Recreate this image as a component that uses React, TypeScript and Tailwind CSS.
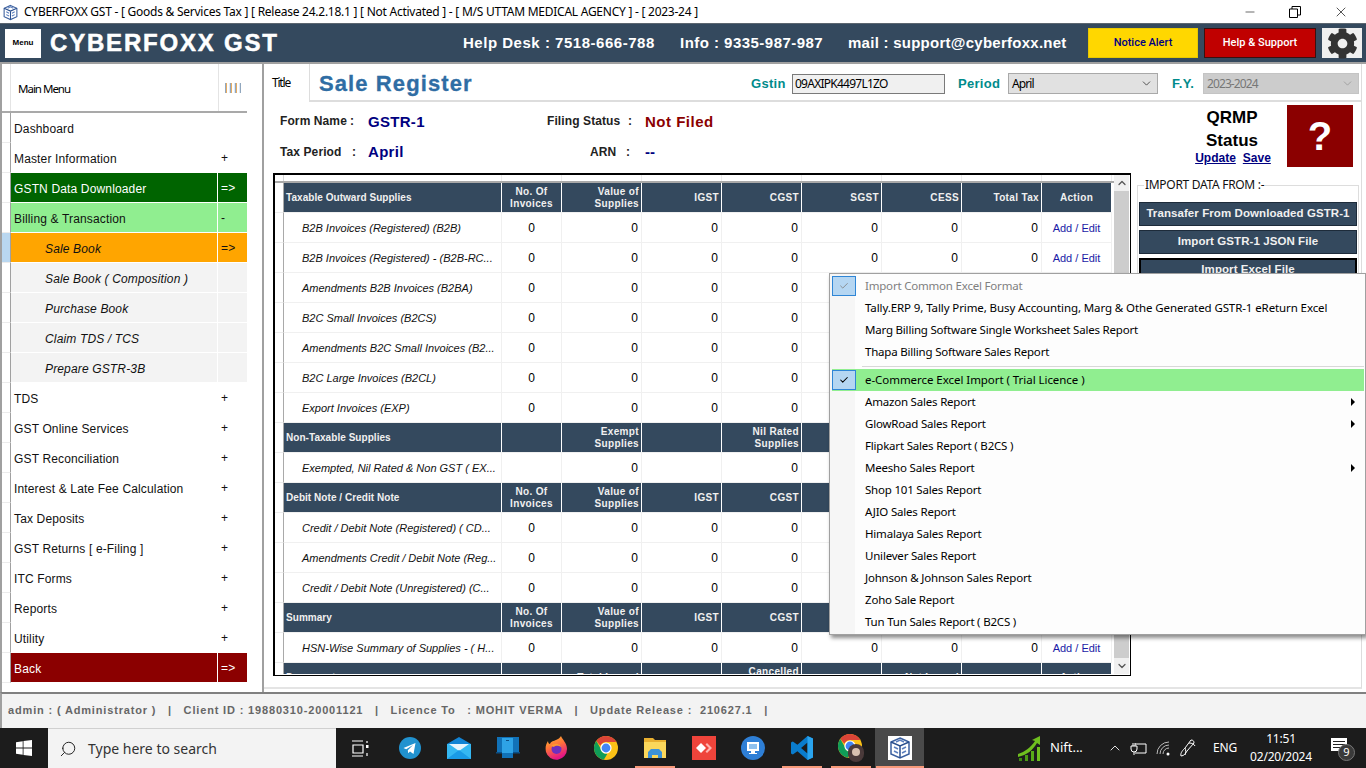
import React from 'react';
import { ChevronDown, ChevronUp, Search, Check, Minus, X } from 'lucide-react';
import { FaCog } from 'react-icons/fa';

const segoe = "font-['Noto_Sans',sans-serif]";

const menuItems = [
  { label: 'Dashboard', mark: '' },
  { label: 'Master Information', mark: '+' },
  { label: 'GSTN Data Downloader', mark: '=>', row: 'bg-[#006400] text-white' },
  { label: 'Billing & Transaction', mark: '-', row: 'bg-[#90ee90]' },
  { label: 'Sale Book', mark: '=>', row: 'bg-[#ffa500]', sub: true, selected: true },
  { label: 'Sale Book ( Composition )', mark: '', row: 'bg-[#f3f3f3]', sub: true },
  { label: 'Purchase Book', mark: '', row: 'bg-[#f3f3f3]', sub: true },
  { label: 'Claim TDS / TCS', mark: '', row: 'bg-[#f3f3f3]', sub: true },
  { label: 'Prepare GSTR-3B', mark: '', row: 'bg-[#f3f3f3]', sub: true },
  { label: 'TDS', mark: '+' },
  { label: 'GST Online Services', mark: '+' },
  { label: 'GST Reconciliation', mark: '+' },
  { label: 'Interest & Late Fee Calculation', mark: '+' },
  { label: 'Tax Deposits', mark: '+' },
  { label: 'GST Returns [ e-Filing ]', mark: '+' },
  { label: 'ITC Forms', mark: '+' },
  { label: 'Reports', mark: '+' },
  { label: 'Utility', mark: '+' },
  { label: 'Back', mark: '=>', row: 'bg-[#8b0000] text-white' },
];

const colWidths = ['w-[218px]', 'w-[60px]', 'w-[80px]', 'w-[80px]', 'w-[80px]', 'w-[80px]', 'w-[80px]', 'w-[80px]', 'w-[70px]'];

const fullHead = ['No. Of\nInvoices', 'Value of\nSupplies', 'IGST', 'CGST', 'SGST', 'CESS', 'Total Tax', 'Action'];

type Row =
  | { head: string; cols: string[] }
  | { label: string; vals: string[] };

const zeros = ['0', '0', '0', '0', '0', '0', '0', 'Add / Edit'];

const rows: Row[] = [
  { head: 'Taxable Outward Supplies', cols: fullHead },
  { label: 'B2B Invoices (Registered) (B2B)', vals: zeros },
  { label: 'B2B Invoices (Registered) - (B2B-RC...', vals: zeros },
  { label: 'Amendments B2B Invoices (B2BA)', vals: zeros },
  { label: 'B2C Small Invoices (B2CS)', vals: zeros },
  { label: 'Amendments B2C Small Invoices (B2...', vals: zeros },
  { label: 'B2C Large Invoices (B2CL)', vals: zeros },
  { label: 'Export Invoices (EXP)', vals: zeros },
  { head: 'Non-Taxable Supplies', cols: ['', 'Exempt\nSupplies', '', 'Nil Rated\nSupplies', '', 'Non GST\nSupplies', '', ''] },
  { label: 'Exempted, Nil Rated & Non GST ( EX...', vals: ['', '0', '', '0', '', '0', '', 'Add / Edit'] },
  { head: 'Debit Note / Credit Note', cols: fullHead },
  { label: 'Credit / Debit Note (Registered) ( CD...', vals: zeros },
  { label: 'Amendments Credit / Debit Note (Reg...', vals: zeros },
  { label: 'Credit / Debit Note (Unregistered) (C...', vals: zeros },
  { head: 'Summary', cols: fullHead },
  { label: 'HSN-Wise Summary of Supplies - ( H...', vals: zeros },
  { head: 'Documents', cols: ['', 'Total Issued', '', 'Cancelled\nDocuments', '', 'Net Issued', '', 'Action'] },
];

const popupTop = [
  'Marg Billing Software Single Worksheet Sales Report',
  'Thapa Billing Software Sales Report',
];

const popupBottom = [
  { t: 'Amazon Sales Report', more: true },
  { t: 'GlowRoad Sales Report', more: true },
  { t: 'Flipkart Sales Report ( B2CS )' },
  { t: 'Meesho Sales Report', more: true },
  { t: 'Shop 101 Sales Report' },
  { t: 'AJIO Sales Report' },
  { t: 'Himalaya Sales Report' },
  { t: 'Unilever Sales Report' },
  { t: 'Johnson & Johnson Sales Report' },
  { t: 'Zoho Sale Report' },
  { t: 'Tun Tun Sales Report ( B2CS )' },
];

const CubeIcon = ({ size }: { size: number }) => (
  <svg width={size} height={size} viewBox="0 0 24 24">
    <path d="M12 2l9 4v12l-9 4-9-4V6z" fill="#fff" stroke="#3a5f9e" strokeWidth="1.5" />
    <path d="M3 6l9 4 9-4M12 10v12" fill="none" stroke="#2a4f8e" strokeWidth="1.5" />
    <path d="M6 11l4 2M6 15l4 2M14 13l4-2M14 17l4-2M8 6l4-2 4 2" fill="none" stroke="#5b7fbe" strokeWidth="1.5" />
  </svg>
);

const ChromeIcon = () => (
  <svg width="24" height="24" viewBox="0 0 24 24">
    <circle cx="12" cy="12" r="12" fill="#fbc116" />
    <path d="M12 0a12 12 0 0 1 10.4 6H12a6 6 0 0 0-5.6 3.8L2.3 4.9A12 12 0 0 1 12 0z" fill="#db4437" />
    <path d="M2.3 4.9l4.9 8.6a5.5 5.5 0 0 0 6.2 4.3L9.8 23.8A12 12 0 0 1 2.3 4.9z" fill="#0f9d58" />
    <circle cx="12" cy="12" r="5.6" fill="#fff" />
    <circle cx="12" cy="12" r="4.4" fill="#4285f4" />
  </svg>
);

const taskIcons: { key: string; run?: boolean; active?: boolean; el: React.ReactNode }[] = [
  {
    key: 'view',
    el: (
      <svg width="17" height="17" viewBox="0 0 17 17" fill="none" stroke="#fff" strokeWidth="1.2">
        <path d="M0 1h11M0 16h11M1 5h10v8H1zM15 1v2M15 13v3" />
        <rect x="14" y="5" width="2.5" height="3" fill="#fff" stroke="none" />
      </svg>
    ),
  },
  {
    key: 'telegram',
    el: (
      <svg width="22" height="22" viewBox="0 0 22 22">
        <circle cx="11" cy="11" r="11" fill="#2192cf" />
        <path d="M4.5 11l12-5-2 11-3.5-2.6-1.8 1.8-.4-3L14 8l-6.800 4.300z" fill="#fff" />
      </svg>
    ),
  },
  {
    key: 'mail',
    el: (
      <svg width="24" height="22" viewBox="0 0 24 22">
        <path d="M0 7l12-7 12 7v15H0z" fill="#1283d4" />
        <path d="M0 7h24v15H0z" fill="#35b8f2" />
        <path d="M2 7h20l-10 7z" fill="#e8f4fc" />
        <path d="M0 22l12-9 12 9z" fill="#1a9be6" />
      </svg>
    ),
  },
  {
    key: 'tablet',
    el: (
      <svg width="24" height="22" viewBox="0 0 24 22">
        <rect x="1" y="0" width="22" height="16" fill="#1172b8" />
        <rect x="0" y="15" width="24" height="1.500" fill="#0b4f86" />
        <rect x="6" y="1" width="11" height="20" fill="#2ea3e6" />
        <rect x="6" y="16" width="11" height="5" fill="#1172b8" />
        <rect x="10" y="3" width="3" height="1" fill="#0b4f86" />
      </svg>
    ),
  },
  {
    key: 'firefox',
    el: (
      <svg width="23" height="24" viewBox="0 0 23 24">
        <defs>
          <linearGradient id="ff" x1="0" y1="0" x2="0.400" y2="1">
            <stop offset="0" stopColor="#ffc02e" />
            <stop offset="0.500" stopColor="#ff7139" />
            <stop offset="1" stopColor="#e31587" />
          </linearGradient>
        </defs>
        <path d="M16 0c1 3 6 7 6 13a10.700 10.700 0 0 1-21 3C0 11 1 8 3 5c0 2 1 3 2 3 1-3 4-3 6-4 2-1 4-2 5-4z" fill="url(#ff)" />
        <circle cx="11.500" cy="13" r="5" fill="#6e2fbf" />
        <path d="M6 10c3-3 9-3 10 1-2-1-5-2-7 0z" fill="#ff9a2e" />
      </svg>
    ),
  },
  { key: 'chrome', el: <ChromeIcon /> },
  {
    key: 'folder',
    run: true,
    el: (
      <svg width="22" height="20" viewBox="0 0 22 20">
        <path d="M0 0h9l2 2h11v18H0z" fill="#e9b030" />
        <rect x="0" y="4" width="22" height="16" fill="#fbd75b" />
        <path d="M4 20v-6l3-3h8l3 3v6h-4v-3H8v3z" fill="#3d92d8" />
      </svg>
    ),
  },
  {
    key: 'anydesk',
    el: (
      <svg width="24" height="24" viewBox="0 0 24 24">
        <rect width="24" height="24" fill="#ef443b" />
        <path d="M9 7l5 5-5 5-5-5z" fill="#fff" />
        <path d="M15 7l5 5-5 5-1.500-1.500L17 12l-3.500-3.500z" fill="#ffb3ae" />
      </svg>
    ),
  },
  {
    key: 'monitor',
    el: (
      <svg width="24" height="24" viewBox="0 0 24 24">
        <circle cx="12" cy="12" r="12" fill="#2e7fd6" />
        <rect x="6" y="6" width="12" height="9" fill="#fff" />
        <rect x="8" y="8" width="8" height="5" fill="#8fc1ee" />
        <path d="M10 15h4v2h2v1H8v-1h2z" fill="#fff" />
      </svg>
    ),
  },
  {
    key: 'vscode',
    run: true,
    el: (
      <svg width="22" height="24" viewBox="0 0 24 30" preserveAspectRatio="none">
        <path d="M18 0l6 3v24l-6 3-11-11-5 4-2-1V8l2-1 5 4z" fill="#0a7ccc" />
        <path d="M18 8l-7 7 7 7z" fill="#1c1c1c" />
        <path d="M18 0l6 3v24l-6 3z" fill="#2aa4ee" />
      </svg>
    ),
  },
  {
    key: 'chrome2',
    run: true,
    el: (
      <div className="relative w-[26px] h-[28px]">
        <ChromeIcon />
        <div className="absolute right-0 bottom-0 w-[16px] h-[18px] rounded-full bg-[#4a3a3a]" />
        <div className="absolute right-[4px] bottom-[6px] w-[8px] h-[8px] rounded-full bg-[#d8c0b0]" />
      </div>
    ),
  },
  {
    key: 'app',
    run: true,
    active: true,
    el: (
      <div className="w-[24px] h-[24px] bg-white flex items-center justify-center">
        <CubeIcon size={24} />
      </div>
    ),
  },
];

const Select = ({ value, disabled, className }: { value: string; disabled?: boolean; className: string }) => (
  <div
    className={`${className} h-[21px] flex items-center justify-between pl-[3px] pr-[4px] border ${
      disabled ? 'bg-[#cccccc] border-[#c4c4c4] text-[#777777]' : 'bg-[#e1e1e1] border-[#a9a9a9] text-black'
    } text-[12px] tracking-[-0.9px] ${segoe}`}
  >
    <span>{value}</span>
    <ChevronDown size={13} strokeWidth={1.5} className={disabled ? 'text-[#999999]' : 'text-[#333333]'} />
  </div>
);

const HeadCell = ({ text, width, first, center }: { text: string; width: string; first?: boolean; center?: boolean }) => (
  <div
    className={`${width} shrink-0 h-full border-r border-white flex items-center whitespace-pre-line leading-[12px] pt-[1px] ${
      first ? 'pl-[2px] justify-start tracking-[0.05px]' : center ? 'justify-center text-center' : 'pr-[2px] justify-end text-right'
    }`}
  >
    {text}
  </div>
);

const TableRow = ({ row }: { row: Row }) => {
  if ('head' in row) {
    return (
      <div className="flex h-[30px] bg-[#34495e] text-[#f0f0f0] text-[10px] font-bold tracking-[0.35px] border-b border-[#f0f0f0]">
        <HeadCell text={row.head} width={colWidths[0]} first />
        {row.cols.map((c, i) => (
          <HeadCell key={i} text={c} width={colWidths[i + 1]} center={i === 0 || i === 7} />
        ))}
      </div>
    );
  }
  return (
    <div className="flex h-[30px] bg-white text-black border-b border-[#f0f0f0]">
      <div className="w-[218px] shrink-0 border-r border-[#f0f0f0] pl-[18px] pt-[1px] flex items-center italic text-[11px] text-[#111111] whitespace-nowrap overflow-hidden">
        {row.label}
      </div>
      {row.vals.map((v, i) => (
        <div
          key={i}
          className={`${colWidths[i + 1]} shrink-0 border-r border-[#f0f0f0] flex items-center pt-[1px] text-[12px] ${
            i === 0 ? 'justify-center' : i === 7 ? 'justify-center' : 'justify-end pr-[3px]'
          }`}
        >
          {i === 7 && v ? <span className="text-[11px] text-[#1a1aa6]">{v}</span> : v}
        </div>
      ))}
    </div>
  );
};

const ImportButton = ({ label, strong }: { label: string; strong?: boolean }) => (
  <div
    className={`h-[24px] flex items-center justify-center bg-[#34495e] text-[#f0f0f0] text-[11.500px] font-bold tracking-[0.08px] border ${
      strong ? 'border-black border-2' : 'border-[#1d2b3a]'
    }`}
  >
    {label}
  </div>
);

const PopupItem = ({ text, more, muted, wide }: { text: string; more?: boolean; muted?: boolean; wide?: boolean }) => (
  <div className={`h-[22px] flex items-center pl-[35px] pr-[10px] justify-between ${muted ? 'text-[#808080]' : 'text-black'} ${wide ? 'tracking-[-0.1px]' : ''}`}>
    <span className="whitespace-nowrap">{text}</span>
    {more && <span className="w-0 h-0 border-y-[4px] border-y-transparent border-l-[4px] border-l-black" />}
  </div>
);

export default function App() {
  return (
    <div className="relative w-[1366px] h-[768px] overflow-hidden flex flex-col bg-white font-['Liberation_Sans',Arial,sans-serif]">
      {/* Title bar */}
      <div className="h-[23px] shrink-0 flex items-center bg-white text-black">
        <div className="w-[24px] pl-[2px] pt-[1px]">
          <CubeIcon size={17} />
        </div>
        <span className={`text-[12px] tracking-[-0.25px] whitespace-pre ${segoe}`}>
          CYBERFOXX GST - [ Goods &amp; Services Tax ] [ Release 24.2.18.1 ] [ Not Activated ] - [ M/S UTTAM MEDICAL AGENCY ] - [ 2023-24 ]
        </span>
        <div className="ml-auto flex items-center text-black">
          <Minus size={14} strokeWidth={1} className="mr-[32px]" />
          <svg width="12" height="12" viewBox="0 0 12 12" fill="none" stroke="#000" className="mr-[32px]">
            <path d="M.5 3h8v8.500h-8zM3 3V.5h8.500V9H8.500" />
          </svg>
          <X size={16} strokeWidth={1} className="mr-[17px]" />
        </div>
      </div>

      {/* App header */}
      <div className="h-[41px] shrink-0 flex items-center bg-[#34495e] border-t border-[#5c6670] border-b-2 border-b-[#a0a0a0] pl-[5px] text-white font-bold">
        <div className="w-[36px] h-[29px] bg-white flex items-center justify-center text-[8px] text-black font-bold">Menu</div>
        <div className="ml-[9px] w-[413px] text-[24px] tracking-[1.8px] [-webkit-text-stroke:0.5px_white]">CYBERFOXX GST</div>
        <div className="w-[217px] text-[15px] tracking-[0.52px] whitespace-nowrap">Help Desk : 7518-666-788</div>
        <div className="w-[168px] text-[15px] tracking-[0.47px] whitespace-nowrap">Info : 9335-987-987</div>
        <div className="w-[240px] text-[15px] tracking-[0.26px] whitespace-nowrap">mail : support@cyberfoxx.net</div>
        <div className="w-[110px] h-[30px] bg-[#ffd700] border border-[#e8c800] flex items-center justify-center text-[#000080] text-[11px] font-medium font-['Roboto',sans-serif]">
          Notice Alert
        </div>
        <div className="ml-[6px] w-[112px] h-[30px] bg-[#c00000] border border-[#3a1010] flex items-center justify-center text-white text-[11px] font-medium font-['Roboto',sans-serif]">
          Help &amp; Support
        </div>
        <div className="ml-[6px] w-[40px] h-[30px] bg-[#f0f0f0] flex items-center justify-center">
          <FaCog size={31} className="text-[#333333]" />
        </div>
      </div>

      {/* Body */}
      <div className="h-[628px] shrink-0 flex">
        {/* Sidebar */}
        <aside className="w-[264px] shrink-0 border-l-2 border-l-[#a0a0a0] border-r-2 border-r-[#a0a0a0] bg-white">
          <div className="w-[245px] flex flex-col">
            <div className="h-[49px] flex border-b-2 border-[#a9a9a9]">
              <div className="w-[9px] border-r border-[#e4e4e4]" />
              <div className={`w-[207px] pl-[7px] pt-[2px] flex items-center text-[11.500px] tracking-[-1px] ${segoe}`}>Main Menu</div>
              <div className="flex-1 border-l border-[#e4e4e4] flex items-center justify-center">
                <svg width="16" height="10" viewBox="0 0 16 10">
                  {[0, 5, 10, 15].map((x) => (
                    <g key={x}>
                      <rect x={x - 0.2} width="1" height="10" fill="#5f97d6" />
                      <rect x={x + 0.8} width="1" height="10" fill="#e09a40" />
                    </g>
                  ))}
                </svg>
              </div>
            </div>
            {menuItems.map((m) => (
              <div key={m.label} className="flex h-[30px]">
                <div className={`w-[9px] shrink-0 border-r border-r-[#a0a0a0] border-b border-b-[#ececec] ${m.selected ? 'bg-[#b9d7f0]' : 'bg-white'}`} />
                <div className={`flex flex-1 border-b border-white text-[12px] tracking-[0.15px] text-[#111111] ${m.row ?? 'bg-white'}`}>
                  <div className={`w-[207px] flex items-center border-r border-white pt-[2px] ${m.sub ? 'pl-[34px] italic' : 'pl-[3px]'}`}>
                    {m.label}
                  </div>
                  <div className="flex-1 flex items-center pt-[1px] pl-[3px]">{m.mark}</div>
                </div>
              </div>
            ))}
          </div>
        </aside>

        {/* Main panel */}
        <main className="w-[1098px] shrink-0 h-[625px] flex flex-col border-r border-r-[#dddddd] border-b-2 border-b-[#e4e4e4] bg-white">
          <div className="h-[38px] shrink-0 flex">
            <div className={`w-[46px] shrink-0 border-r border-r-[#dddddd] pl-[8px] pt-[10px] text-[12px] tracking-[-1.2px] ${segoe}`}>Title</div>
            <div className="flex-1 flex items-center border-b-2 border-[#dddddd] pt-[3px]">
              <div className="ml-[9px] w-[432px] text-[22px] font-bold tracking-[1.1px] text-[#2f6da4] [-webkit-text-stroke:0.3px_#2f6da4]">Sale Register</div>
              <div className="w-[41px] text-[13px] font-bold tracking-[0.3px] text-[#008b8b] pt-[1px]">Gstin</div>
              <div className={`w-[153px] h-[20px] bg-[#f0f0f0] border border-[#7a7a7a] pl-[2px] flex items-center text-[12px] tracking-[-0.75px] ${segoe}`}>09AXIPK4497L1ZO</div>
              <div className="ml-[13px] w-[50px] text-[13px] font-bold tracking-[0.3px] text-[#008b8b]">Period</div>
              <Select value="April" className="w-[150px]" />
              <div className="ml-[14px] w-[31px] text-[13px] font-bold tracking-[0.3px] text-[#008b8b]">F.Y.</div>
              <Select value="2023-2024" disabled className="w-[156px]" />
            </div>
          </div>

          <div className="flex flex-1 min-h-0">
            <div className="w-[873px] shrink-0 pl-[9px]">
              <div className="h-[71px] pl-[7px] pt-[9px] text-[12px] font-bold text-[#222222] tracking-[0.1px]">
                <div className="flex items-center h-[20px]">
                  <span className="w-[70px]">Form Name</span>
                  <span className="w-[18px]">:</span>
                  <span className="w-[179px] pt-[2px] text-[15px] text-[#000080] tracking-[0.3px]">GSTR-1</span>
                  <span className="w-[81px]">Filing Status</span>
                  <span className="w-[17px]">:</span>
                  <span className="pt-[2px] text-[15px] text-[#8b0000] tracking-[0.5px]">Not Filed</span>
                </div>
                <div className="flex items-center h-[20px] mt-[11px]">
                  <span className="w-[72px]">Tax Period</span>
                  <span className="w-[16px]">:</span>
                  <span className="w-[179px] text-[15px] text-[#000080] tracking-[0.3px]">April</span>
                  <span className="w-[79px] pl-[43px]">ARN</span>
                  <span className="w-[19px]">:</span>
                  <span className="text-[15px] text-[#000080]">--</span>
                </div>
              </div>

              {/* Register grid */}
              <div className="w-[858px] h-[503px] border-l-2 border-t-2 border-r border-b border-black pr-[1px] pb-[1px] flex overflow-hidden">
                <div className="flex-1 min-w-0 overflow-hidden">
                  <div className="flex h-[8px] border-b-2 border-[#a9a9a9]">
                    <div className="w-[9px] border-r border-[#d8d8d8]" />
                    {colWidths.map((w, i) => (
                      <div key={i} className={`${w} border-r border-[#ececec]`} />
                    ))}
                  </div>
                  {rows.map((r, i) => (
                    <div key={i} className="flex">
                      <div className="w-[9px] shrink-0 h-[30px] border-r border-r-[#a9a9a9] border-b border-b-[#ececec]" />
                      <TableRow row={r} />
                    </div>
                  ))}
                </div>
                <div className="w-[15px] shrink-0 flex flex-col bg-[#f0f0f0]">
                  <div className="h-[16px] flex items-center justify-center">
                    <ChevronUp size={12} strokeWidth={2.5} className="text-[#555555]" />
                  </div>
                  <div className="flex-1 bg-[#cdcdcd]" />
                  <div className="h-[16px] flex items-center justify-center">
                    <ChevronDown size={12} strokeWidth={2.5} className="text-[#555555]" />
                  </div>
                </div>
              </div>
            </div>

            {/* Right column */}
            <div className="flex-1 min-w-0">
              <div className="h-[71px] flex justify-end pr-[8px] pt-[3px] gap-[10px]">
                <div className="w-[90px] text-center font-bold">
                  <div className="text-[17px] leading-[23px] text-black mt-[1px]">QRMP</div>
                  <div className="text-[17px] leading-[23px] text-black">Status</div>
                  <div className="text-[12px] leading-[13px] text-[#000080] flex justify-center gap-[7px] pl-[2px]">
                    <span className="underline">Update</span>
                    <span className="underline">Save</span>
                  </div>
                </div>
                <div className="w-[66px] h-[62px] bg-[#8b0000] flex items-center justify-center text-white text-[40px] font-bold">?</div>
              </div>
              <fieldset className="mt-[5px] w-[222px] h-[280px] border border-[#dddddd] px-[1px]">
                <legend className={`ml-[5px] px-[1px] text-[12px] leading-[14px] tracking-[-0.3px] text-[#111111] ${segoe}`}>IMPORT DATA FROM :-</legend>
                <div className="flex flex-col gap-[4px] mt-[10px]">
                  <ImportButton label="Transafer From Downloaded GSTR-1" />
                  <ImportButton label="Import GSTR-1 JSON File" />
                  <ImportButton label="Import Excel File" strong />
                </div>
              </fieldset>
            </div>
          </div>
        </main>
      </div>

      {/* Status bar */}
      <div className="h-[36px] shrink-0 flex items-center bg-[#f3f3f3] border-t-2 border-t-[#808080] border-l-2 border-l-[#a0a0a0] pl-[6px] pb-[2px] text-[11px] font-bold tracking-[0.84px] text-[#666666] whitespace-pre">
        admin : ( Administrator )   |   Client ID : 19880310-20001121   |   Licence To   : MOHIT VERMA   |   Update Release :  210627.1   |
      </div>

      {/* Windows taskbar */}
      <div className="h-[40px] shrink-0 flex bg-[#1c1c1c] text-white">
        <div className="w-[48px] flex items-center justify-center">
          <svg width="16" height="16" viewBox="0 0 16 16" fill="#fff">
            <path d="M0 2.200l6.700-1v6.300H0zM7.500 1.100L16 0v7.500H7.500zM0 8.400h6.700v6.400L0 13.800zM7.500 8.400H16V16l-8.500-1.100z" />
          </svg>
        </div>
        <div className={`w-[288px] bg-[#f3f3f3] border-t border-[#d0d0d0] flex items-center text-[#333333] text-[14px] ${segoe}`}>
          <Search size={18} strokeWidth={1.3} className="ml-[11px] mr-[11px] -scale-x-100 text-[#222222]" />
          Type here to search
        </div>
        {taskIcons.map((t) => (
          <div key={t.key} className={`relative w-[49px] h-full flex items-center justify-center ${t.active ? 'bg-[#4a4a4a]' : ''}`}>
            {t.el}
            {t.run && (
              <div className={`absolute bottom-0 h-[2px] bg-[#f79a7a] ${t.active ? 'w-[48px]' : 'w-[40px]'}`} />
            )}
          </div>
        ))}
        <div className="flex-1 flex items-center pl-[93px]">
          <svg width="24" height="26" viewBox="0 0 24 26" className="mr-[9px]">
            <path d="M1 19c7-2 13-7 17-13l-3-1 8-4 0 9-3-2c-4 7-10 12-19 14z" fill="#6fbf1f" />
            <rect x="2" y="23" width="3" height="3" fill="#3d8a10" />
            <rect x="8" y="20" width="3" height="6" fill="#4b9a14" />
            <rect x="14" y="16" width="3" height="10" fill="#58aa18" />
            <rect x="20" y="12" width="3" height="14" fill="#6fbf1f" />
          </svg>
          <span className={`w-[57px] text-[13px] ${segoe}`}>Nift...</span>
          <ChevronUp size={16} strokeWidth={1.3} className="mr-[7px]" />
          <svg width="17" height="14" viewBox="0 0 17 14" fill="none" stroke="#fff" strokeWidth="1" className="mr-[9px]">
            <path d="M5 3h11v9H5M1 5h6v3a3 3 0 0 1-6 0zM3 5V2M5 5V2M4 11v3" />
          </svg>
          <svg width="15" height="15" viewBox="0 0 15 15" fill="none" stroke="#bbbbbb" strokeWidth="1" className="mr-[9px]">
            <path d="M1 13a12 12 0 0 1 12-12M4 13a9 9 0 0 1 9-9M7 13a6 6 0 0 1 6-6" />
            <circle cx="12" cy="13" r="1.500" fill="#fff" stroke="none" />
          </svg>
          <svg width="16" height="18" viewBox="0 0 16 18" fill="none" stroke="#ffffff" strokeWidth="1" className="mr-[17px]">
            <path d="M1 17c-1-3 2-6 4-8l6-8c2 0 3 1 3 3l-7 8c-1 2-3 5-6 5zM5 9c1 2 1 5 0 7M9 4c3 0 5 1 6 3" />
          </svg>
          <span className={`w-[32px] text-[12px] tracking-[-0.2px] ${segoe}`}>ENG</span>
          <div className={`w-[72px] flex flex-col items-center text-[12px] leading-[18px] tracking-[-0.2px] ${segoe}`}>
            <span>11:51</span>
            <span>02/20/2024</span>
          </div>
          <div className="relative ml-[14px] w-[24px] h-[24px]">
            <div className="absolute left-0 top-[2px] w-[16px] h-[13px] bg-white flex flex-col justify-center gap-[2px] px-[2px]">
              <div className="h-[1px] bg-[#222222]" />
              <div className="h-[1px] bg-[#222222]" />
              <div className="h-[1px] bg-[#222222]" />
            </div>
            <div className={`absolute left-[7px] top-[8px] w-[17px] h-[17px] rounded-full bg-[#3a3a3a] border border-[#777777] flex items-center justify-center text-[11px] text-white ${segoe}`}>9</div>
          </div>
        </div>
      </div>

      {/* Import context menu */}
      <div className={`absolute left-[829px] top-[273px] w-[537px] h-[362px] bg-[#fdfdfd] border border-[#a0a0a0] shadow-[2px_3px_4px_rgba(0,0,0,0.45)] text-[11.500px] tracking-[-0.2px] pt-[1px] ${segoe}`}>
        <div className="absolute left-0 top-0 bottom-0 w-[25px] bg-[#f6f6f6]" />
        <div className="relative">
          <div className="absolute left-[2px] top-[1px] w-[24px] h-[20px] bg-[#b5d6f2] border border-[#2f86d6] flex items-center justify-center">
            <Check size={10} strokeWidth={2} className="text-[#808080]" />
          </div>
          <PopupItem text="Import Common Excel Format" muted />
          <PopupItem text="Tally.ERP 9, Tally Prime, Busy Accounting, Marg & Othe Generated GSTR-1 eReturn Excel" wide />
          {popupTop.map((t) => (
            <PopupItem key={t} text={t} />
          ))}
          <div className="h-[4px] flex items-end">
            <div className="ml-[32px] mr-[1px] flex-1 h-[1px] bg-[#d8d8d8]" />
          </div>
          <div className="relative h-[22px] mt-[2px] ml-[2px] mr-[1px] bg-[#90ee90] flex items-center pl-[33px] tracking-[-0.05px]">
            <div className="absolute left-0 top-[1px] w-[24px] h-[20px] bg-[#b5d6f2] border border-[#2f86d6] flex items-center justify-center">
              <Check size={10} strokeWidth={2.5} className="text-black" />
            </div>
            e-Commerce Excel Import ( Trial Licence )
          </div>
          {popupBottom.map((p) => (
            <PopupItem key={p.t} text={p.t} more={p.more} />
          ))}
        </div>
      </div>
    </div>
  );
}
